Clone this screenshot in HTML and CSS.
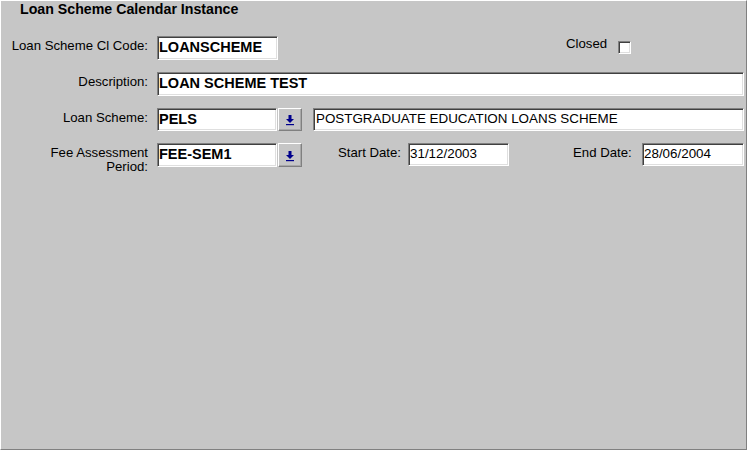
FILE: index.html
```html
<!DOCTYPE html>
<html lang="en">
<head>
  <meta charset="UTF-8" />
  <title>Loan Scheme Calendar Instance</title>
  <link rel="stylesheet" href="styles.css">
</head>
<body>
  <div class="window">
    <h1 class="title">Loan Scheme Calendar Instance</h1>

    <div class="form">
      <div class="row">
        <label class="label" for="code">Loan Scheme Cl Code:</label>
        <input id="code" class="field bold code" type="text" value="LOANSCHEME" />
        <div class="closed">
          <span class="closed-label">Closed</span>
          <span class="check"></span>
        </div>
      </div>

      <div class="row">
        <label class="label" for="desc">Description:</label>
        <input id="desc" class="field bold desc" type="text" value="LOAN SCHEME TEST" />
      </div>

      <div class="row short">
        <label class="label" for="scheme">Loan Scheme:</label>
        <input id="scheme" class="field bold code-short" type="text" value="PELS" />
        <button class="lookup" type="button">
          <svg width="8" height="11" viewBox="0 0 8 11"><rect x="2.5" y="0" width="3" height="4" fill="#00008c"/><path d="M0 4 H8 L4 8 Z" fill="#00008c"/><rect x="0" y="9" width="8" height="1.2" fill="#00008c"/></svg>
        </button>
        <input class="field scheme-name" type="text" value="POSTGRADUATE EDUCATION LOANS SCHEME" />
      </div>

      <div class="row">
        <label class="label two-line" for="period">Fee Assessment<br>Period:</label>
        <input id="period" class="field bold code-short" type="text" value="FEE-SEM1" />
        <button class="lookup tall" type="button">
          <svg width="8" height="11" viewBox="0 0 8 11"><rect x="2.5" y="0" width="3" height="4" fill="#00008c"/><path d="M0 4 H8 L4 8 Z" fill="#00008c"/><rect x="0" y="9" width="8" height="1.2" fill="#00008c"/></svg>
        </button>
        <span class="date-label start">Start Date:</span>
        <input class="field date" type="text" value="31/12/2003" />
        <span class="date-label end">End Date:</span>
        <input class="field date end-date" type="text" value="28/06/2004" />
      </div>
    </div>
  </div>
</body>
</html>
```

FILE: styles.css
```css
* {
  box-sizing: border-box;
}

body {
  margin: 0;
  background: #c6c6c6;
}

.window {
  width: 747px;
  height: 450px;
  background: #c6c6c6;
  border: 1px solid;
  border-color: #ffffff #808080 #808080 #ffffff;
  font-family: "Liberation Sans", Arial, sans-serif;
  font-size: 13.2px;
  color: #000;
}

.title {
  margin: 0;
  padding-left: 19px;
  font-size: 14.2px;
  font-weight: bold;
  line-height: 16px;
}

.form {
  display: flex;
  flex-direction: column;
  gap: 12px;
  margin-top: 19px;
}

.row {
  display: flex;
  align-items: flex-start;
  height: 24px;
}

.row.short {
  height: 23px;
}

.label {
  width: 147px;
  margin-right: 9px;
  padding-top: 3px;
  text-align: right;
  line-height: 14px;
  white-space: nowrap;
}

.field {
  height: 24px;
  margin: 0;
  padding: 0 1px 2px;
  background: #fff;
  border: 1px solid;
  border-color: #808080 #ffffff #ffffff #808080;
  box-shadow: inset 1px 1px 0 #404040, inset -1px -1px 0 #dfdfdf;
  font-family: "Liberation Sans", Arial, sans-serif;
  font-size: 13.4px;
  color: #000;
  outline: none;
}

.field.bold {
  font-size: 14.5px;
  font-weight: bold;
}

.code {
  width: 121px;
}

.desc {
  width: 587px;
}

.code-short {
  width: 120px;
}

.short .field {
  height: 23px;
}

.scheme-name {
  width: 431px;
  margin-left: 11px;
  padding-left: 2px;
}

.lookup {
  width: 24px;
  height: 23px;
  margin: 0 0 0 1px;
  padding: 0;
  display: flex;
  align-items: center;
  justify-content: center;
  background: #c6c6c6;
  border: 1px solid;
  border-color: #ffffff #808080 #808080 #ffffff;
  box-shadow: inset -1px -1px 0 #a8a8a8;
}

.lookup svg {
  margin-top: 2px;
}

.lookup.tall {
  height: 24px;
}

.closed {
  display: flex;
  align-items: flex-start;
  margin-left: 288px;
}

.closed-label {
  padding-top: 1px;
  line-height: 14px;
}

.check {
  width: 13px;
  height: 13px;
  margin: 5px 0 0 11px;
  background: #fff;
  border: 1px solid;
  border-color: #808080 #ffffff #ffffff #808080;
  box-shadow: inset 1px 1px 0 #404040, inset -1px -1px 0 #dfdfdf;
}

.date-label {
  padding-top: 3px;
  line-height: 14px;
  text-align: right;
  white-space: nowrap;
}

.date-label.start {
  width: 62px;
  margin-left: 36px;
  margin-right: 8px;
}

.date-label.end {
  width: 58px;
  margin-left: 64px;
  margin-right: 11px;
}

.date {
  width: 101px;
  height: 23px;
}

.end-date {
  width: 102px;
}
```
